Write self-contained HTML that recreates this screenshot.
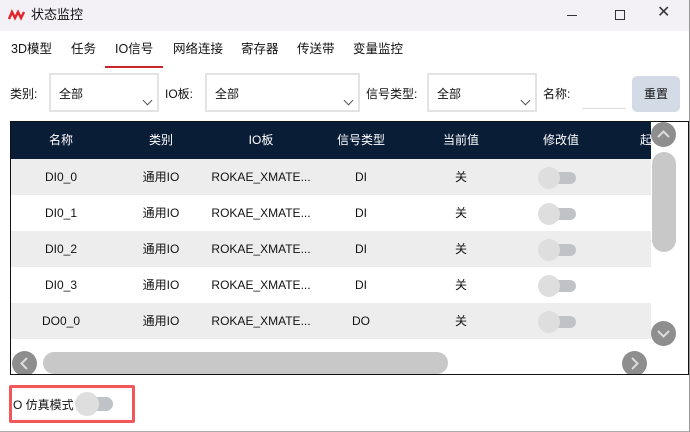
<!DOCTYPE html><html><head><meta charset="utf-8"><style>
*{margin:0;padding:0;box-sizing:border-box}
body{width:690px;height:432px;overflow:hidden;background:#fff;font-family:"Liberation Sans","Noto Sans CJK SC",sans-serif;font-size:12px;line-height:14px;color:#111;position:relative}
.a{position:absolute}
.title{left:0;top:0;width:690px;height:31px;background:#f3f1f6}
.tab{top:42px;font-size:12.5px}
.sel{border:2px solid #e3e3e3;height:39px;top:73px;background:#fff}
.sel span{position:absolute;left:8px;top:12px}
.chev{position:absolute;right:6px;bottom:6px;width:7px;height:7px;border-right:1.3px solid #555;border-bottom:1.3px solid #555;transform:rotate(45deg)}
.lbl{top:87px}
.row{left:11px;width:640px;height:36px}
.c{position:absolute;transform:translateX(-50%);top:11px;white-space:nowrap;height:14px;line-height:14px}
.tg{position:absolute;top:8px;left:527px;width:36px;height:20px}
.tg i{position:absolute;left:12px;top:5px;width:26px;height:12px;border-radius:6px;background:#bfc2c6}
.tg b{position:absolute;left:0;top:0;width:22px;height:22px;border-radius:50%;background:#dedede}
.circ{width:25px;height:25px;border-radius:50%;background:#8e8e8e}
</style></head><body>
<div class="a title"></div>
<svg class="a" style="left:8px;top:9px" width="18" height="12" viewBox="0 0 18 12"><path d="M1 10 L4 3 L7 9 L10 3 L13 9 L16 3" stroke="#e3262b" stroke-width="2.5" fill="none"/></svg>
<div class="a" style="left:31px;top:8px;font-size:13px">状态监控</div>
<div class="a" style="left:567px;top:15px;width:10px;height:1px;background:#333"></div>
<div class="a" style="left:615px;top:10px;width:10px;height:10px;border:1.2px solid #333"></div>
<div class="a" style="left:657px;top:6px;font-size:16px;color:#333">✕</div>
<div class="a tab" style="left:11px">3D模型</div>
<div class="a tab" style="left:71px">任务</div>
<div class="a tab" style="left:115px">IO信号</div>
<div class="a" style="left:105px;top:66px;width:58px;height:2px;background:#c8262c"></div>
<div class="a tab" style="left:173px">网络连接</div>
<div class="a tab" style="left:241px">寄存器</div>
<div class="a tab" style="left:297px">传送带</div>
<div class="a tab" style="left:353px">变量监控</div>
<div class="a lbl" style="left:10px">类别:</div>
<div class="a sel" style="left:49px;width:110px"><span>全部</span><div class="chev"></div></div>
<div class="a lbl" style="left:165px">IO板:</div>
<div class="a sel" style="left:205px;width:155px"><span>全部</span><div class="chev"></div></div>
<div class="a lbl" style="left:366px">信号类型:</div>
<div class="a sel" style="left:427px;width:110px"><span>全部</span><div class="chev"></div></div>
<div class="a lbl" style="left:543px">名称:</div>
<div class="a" style="left:582px;top:108px;width:44px;height:1px;background:#ddd"></div>
<div class="a" style="left:632px;top:76px;width:48px;height:36px;border-radius:5px;background:#d3dbe6;text-align:center;line-height:36px">重置</div>
<div class="a" style="left:10px;top:121px;width:679px;height:254px;border:1px solid #111;overflow:hidden">
<div class="a" style="left:0;top:0;width:679px;height:37px;background:#0a1d37;color:#fff">
<div class="c" style="left:50px">名称</div><div class="c" style="left:150px">类别</div><div class="c" style="left:250px">IO板</div><div class="c" style="left:350px">信号类型</div><div class="c" style="left:450px">当前值</div><div class="c" style="left:550px">修改值</div><div class="c" style="left:635px">起</div></div>
<div class="a row" style="top:37px;left:0;background:#ededed"><div class="c" style="left:50px">DI0_0</div><div class="c" style="left:150px">通用IO</div><div class="c" style="left:250px">ROKAE_XMATE...</div><div class="c" style="left:350px">DI</div><div class="c" style="left:450px">关</div><div class="tg"><i></i><b></b></div></div>
<div class="a row" style="top:73px;left:0"><div class="c" style="left:50px">DI0_1</div><div class="c" style="left:150px">通用IO</div><div class="c" style="left:250px">ROKAE_XMATE...</div><div class="c" style="left:350px">DI</div><div class="c" style="left:450px">关</div><div class="tg"><i></i><b></b></div></div>
<div class="a row" style="top:109px;left:0;background:#ededed"><div class="c" style="left:50px">DI0_2</div><div class="c" style="left:150px">通用IO</div><div class="c" style="left:250px">ROKAE_XMATE...</div><div class="c" style="left:350px">DI</div><div class="c" style="left:450px">关</div><div class="tg"><i></i><b></b></div></div>
<div class="a row" style="top:145px;left:0"><div class="c" style="left:50px">DI0_3</div><div class="c" style="left:150px">通用IO</div><div class="c" style="left:250px">ROKAE_XMATE...</div><div class="c" style="left:350px">DI</div><div class="c" style="left:450px">关</div><div class="tg"><i></i><b></b></div></div>
<div class="a row" style="top:181px;left:0;background:#ededed"><div class="c" style="left:50px">DO0_0</div><div class="c" style="left:150px">通用IO</div><div class="c" style="left:250px">ROKAE_XMATE...</div><div class="c" style="left:350px">DO</div><div class="c" style="left:450px">关</div><div class="tg"><i></i><b></b></div></div>
<div class="a" style="left:640px;top:0;width:38px;height:252px;background:#fff"></div>
<div class="a circ" style="left:640px;top:0"><svg width="25" height="25"><path d="M7 15 L12.5 9.5 L18 15" stroke="#ddd" stroke-width="2" fill="none"/></svg></div>
<div class="a" style="left:641px;top:30px;width:24px;height:100px;border-radius:12px;background:#c8c8c8"></div>
<div class="a circ" style="left:640px;top:199px"><svg width="25" height="25"><path d="M7 10 L12.5 15.5 L18 10" stroke="#ddd" stroke-width="2" fill="none"/></svg></div>
<div class="a" style="left:0;top:226px;width:640px;height:26px;background:#fff"></div>
<div class="a circ" style="left:1px;top:229px"><svg width="25" height="25"><path d="M15 7 L9.5 12.5 L15 18" stroke="#ddd" stroke-width="2" fill="none"/></svg></div>
<div class="a" style="left:32px;top:230px;width:405px;height:22px;border-radius:11px;background:#c8c8c8"></div>
<div class="a circ" style="left:611px;top:229px"><svg width="25" height="25"><path d="M10 7 L15.5 12.5 L10 18" stroke="#ddd" stroke-width="2" fill="none"/></svg></div>
</div>
<div class="a" style="left:9px;top:385px;width:126px;height:38px;border:3px solid #f0565a;border-radius:2px"></div>
<div class="a" style="left:13px;top:398px">O 仿真模式</div>
<div class="a" style="left:75px;top:392px;width:40px;height:24px"><div class="a" style="left:10px;top:5px;width:28px;height:14px;border-radius:7px;background:#bfc2c6"></div><div class="a" style="left:0;top:0;width:24px;height:24px;border-radius:50%;background:#dedede"></div></div>
<div class="a" style="left:689px;top:0;width:1px;height:432px;background:#999"></div>
<div class="a" style="left:0;top:431px;width:690px;height:1px;background:#aaa"></div>
</body></html>
